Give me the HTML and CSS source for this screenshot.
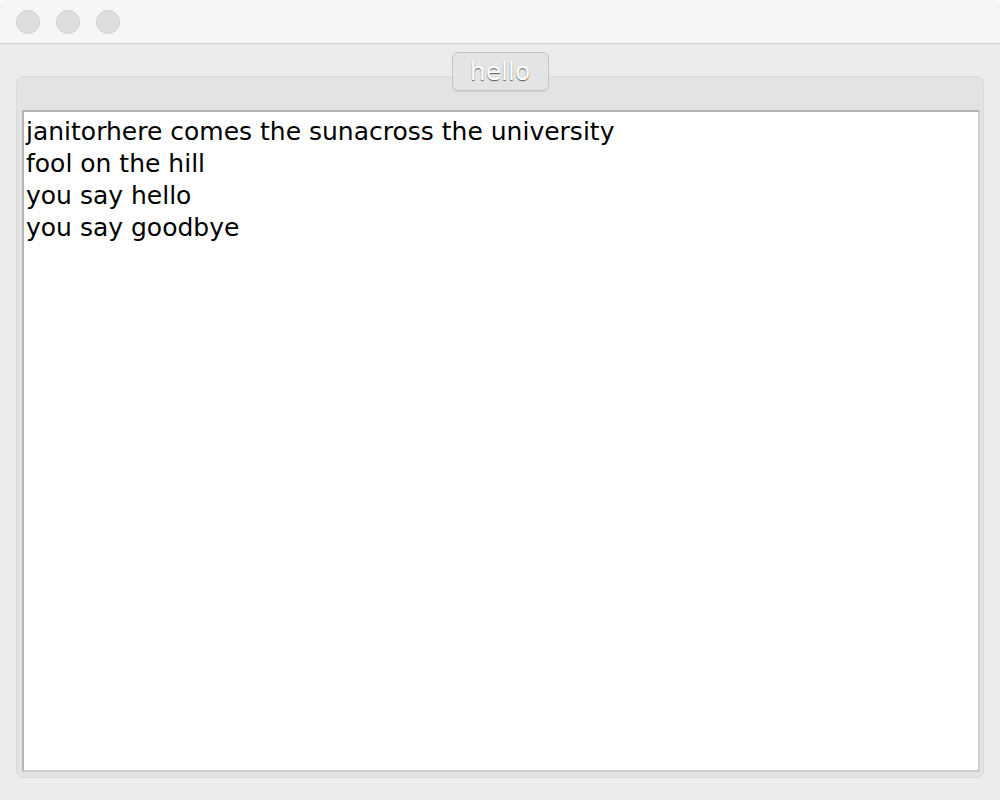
FILE: index.html
```html
<!DOCTYPE html>
<html>
<head>
<meta charset="utf-8">
<link rel="stylesheet" href="styles.css">
</head>
<body>
<div class="window">
  <div class="titlebar">
    <span class="light"></span>
    <span class="light"></span>
    <span class="light"></span>
  </div>
  <div class="content">
    <div class="tabrow"><div class="tab">hello</div></div>
    <div class="panel">
      <div class="textarea">janitorhere comes the sunacross the university<br>fool on the hill<br>you say hello<br>you say goodbye</div>
    </div>
  </div>
</div>
</body>
</html>
```
FILE: styles.css
```css
html, body {
  margin: 0;
  padding: 0;
  background: #ffffff;
}
.window {
  width: 1000px;
  height: 800px;
  background: #ececec;
  border-radius: 6px 6px 0 0;
  overflow: hidden;
  display: flex;
  flex-direction: column;
}
.titlebar {
  flex-shrink: 0;
  height: 43px;
  background: #f6f6f6;
  border-bottom: 1px solid #d1d1d1;
  display: flex;
  align-items: center;
  gap: 16px;
  padding-left: 16px;
}
.light {
  width: 22px;
  height: 22px;
  border-radius: 50%;
  background: #dedede;
  border: 1px solid #d0d0d0;
}
.content {
  display: flex;
  flex-direction: column;
  padding: 8px 16px 0 16px;
}
.tabrow {
  display: flex;
  justify-content: center;
  position: relative;
  z-index: 1;
}
.tab {
  width: 95px;
  height: 37px;
  border: 1px solid #c4c4c4;
  border-radius: 6px;
  background: #e4e4e4;
  box-shadow: 0 1px 1px rgba(0,0,0,0.08);
  display: flex;
  align-items: center;
  justify-content: center;
  font-family: "DejaVu Sans", sans-serif;
  font-size: 25px;
  color: #ffffff;
  text-shadow: 0 1px 1px rgba(0,0,0,0.6);
}
.panel {
  box-sizing: border-box;
  margin-top: -15px;
  height: 702px;
  border: 1px solid #dadada;
  border-radius: 7px;
  background: #e3e3e3;
  padding: 33px 3px 5px 5px;
  display: flex;
}
.textarea {
  flex: 1;
  background: #ffffff;
  border-style: solid;
  border-width: 2px;
  border-color: #b3b3b3 #cfcfcf #cfcfcf #b6b6b6;
  font-family: "DejaVu Sans", sans-serif;
  font-size: 25px;
  line-height: 32px;
  color: #000000;
  padding: 4px 2px 2px 2px;
}
```
